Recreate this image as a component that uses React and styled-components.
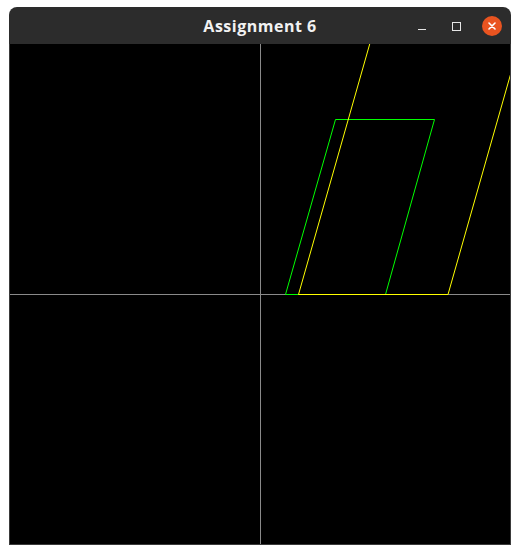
import React from 'react';
import styled, {createGlobalStyle} from 'styled-components';

const GlobalStyle = createGlobalStyle`
  html, body {
    margin: 0;
    padding: 0;
    background: #ffffff;
  }
`

// points in canvas space, origin of the axes at (250, 250)
const green = '275.5,250.5 325.5,75.5 424.5,75.5 375.5,250.5'
const yellow = '288.5,250.5 438,250.5 566,-200 416.6,-200'

function App() {
  return (
    <Page>
      <GlobalStyle />
      <Window>
        <TitleBar>
          <Title>Assignment 6</Title>
          <Controls>
            <Minimize />
            <Maximize />
            <Close>
              <svg width="8" height="8" viewBox="0 0 8 8">
                <path d="M1 1 L7 7 M7 1 L1 7" stroke="#fff" strokeWidth="1.6" strokeLinecap="round" />
              </svg>
            </Close>
          </Controls>
        </TitleBar>
        <Canvas>
          <svg width="500" height="500" viewBox="0 0 500 500">
            <line x1="250.5" y1="0" x2="250.5" y2="500" stroke="#8a8a8a" strokeWidth="1" />
            <line x1="0" y1="250.5" x2="500" y2="250.5" stroke="#8a8a8a" strokeWidth="1" />
            <polygon points={green} fill="none" stroke="#00ff00" strokeWidth="1" />
            <polygon points={yellow} fill="none" stroke="#ffff00" strokeWidth="1" />
          </svg>
        </Canvas>
      </Window>
    </Page>
  )
}

export default App;

const Page = styled.div`
  width: 520px;
  height: 555px;
  padding: 7px 0 0 9px;
  box-sizing: border-box;
`

const Window = styled.div`
  width: 502px;
  background: #2c2c2c;
  border-radius: 8px 8px 0 0;
  overflow: hidden;
  display: flex;
  flex-direction: column;
`

const TitleBar = styled.div`
  height: 37px;
  position: relative;
  display: flex;
  align-items: center;
  justify-content: center;
`

const Title = styled.div`
  color: #f2f2f2;
  font-family: "Open Sans", "DejaVu Sans", sans-serif;
  font-weight: 700;
  font-size: 16px;
  letter-spacing: 0.5px;
  margin-top: 1px;
`

const Controls = styled.div`
  position: absolute;
  right: 9px;
  top: 9px;
  display: flex;
  align-items: center;
`

const Minimize = styled.div`
  width: 8px;
  height: 1px;
  background: #e6e6e6;
  margin-top: 6px;
  margin-right: 26px;
`

const Maximize = styled.div`
  width: 7px;
  height: 7px;
  border: 1px solid #e6e6e6;
  margin-right: 21px;
`

const Close = styled.div`
  width: 20px;
  height: 20px;
  border-radius: 50%;
  background: #e95420;
  display: flex;
  align-items: center;
  justify-content: center;
`

const Canvas = styled.div`
  width: 500px;
  height: 500px;
  background: #000;
  border: 1px solid #3a3a3a;
  border-top: none;
  line-height: 0;
  overflow: hidden;

  svg {
    display: block;
  }
`
